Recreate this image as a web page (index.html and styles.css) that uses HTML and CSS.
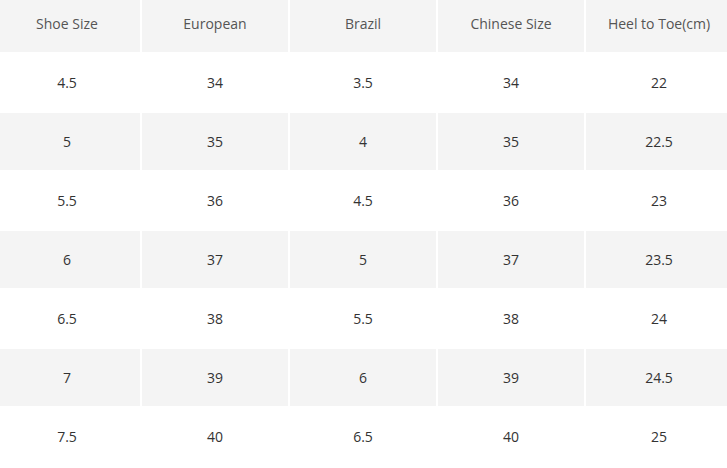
FILE: index.html
```html
<!DOCTYPE html>
<html>
<head>
<meta charset="utf-8">
<link rel="stylesheet" href="styles.css">
</head>
<body>
<div class="chart">
  <div class="cell head">Shoe Size</div>
  <div class="cell head">European</div>
  <div class="cell head">Brazil</div>
  <div class="cell head">Chinese Size</div>
  <div class="cell head">Heel to Toe(cm)</div>

  <div class="cell">4.5</div><div class="cell">34</div><div class="cell">3.5</div><div class="cell">34</div><div class="cell">22</div>
  <div class="cell alt">5</div><div class="cell alt">35</div><div class="cell alt">4</div><div class="cell alt">35</div><div class="cell alt">22.5</div>
  <div class="cell">5.5</div><div class="cell">36</div><div class="cell">4.5</div><div class="cell">36</div><div class="cell">23</div>
  <div class="cell alt">6</div><div class="cell alt">37</div><div class="cell alt">5</div><div class="cell alt">37</div><div class="cell alt">23.5</div>
  <div class="cell">6.5</div><div class="cell">38</div><div class="cell">5.5</div><div class="cell">38</div><div class="cell">24</div>
  <div class="cell alt">7</div><div class="cell alt">39</div><div class="cell alt">6</div><div class="cell alt">39</div><div class="cell alt">24.5</div>
  <div class="cell">7.5</div><div class="cell">40</div><div class="cell">6.5</div><div class="cell">40</div><div class="cell">25</div>
</div>
</body>
</html>
```

FILE: styles.css
```css
html, body {
  margin: 0;
  padding: 0;
  background: #ffffff;
  overflow: hidden;
}
.chart {
  display: grid;
  grid-template-columns: repeat(5, 1fr);
  grid-auto-rows: 57px;
  gap: 2px;
  width: 738px;
  margin: -5px 0 0 -6px;
  font-family: "Open Sans", "Liberation Sans", sans-serif;
  font-size: 14px;
  color: #333333;
}
.cell {
  display: flex;
  align-items: center;
  justify-content: center;
  background: #ffffff;
}
.cell.head {
  background: #f4f4f4;
  color: #555555;
}
.cell.alt {
  background: #f4f4f4;
}
```
